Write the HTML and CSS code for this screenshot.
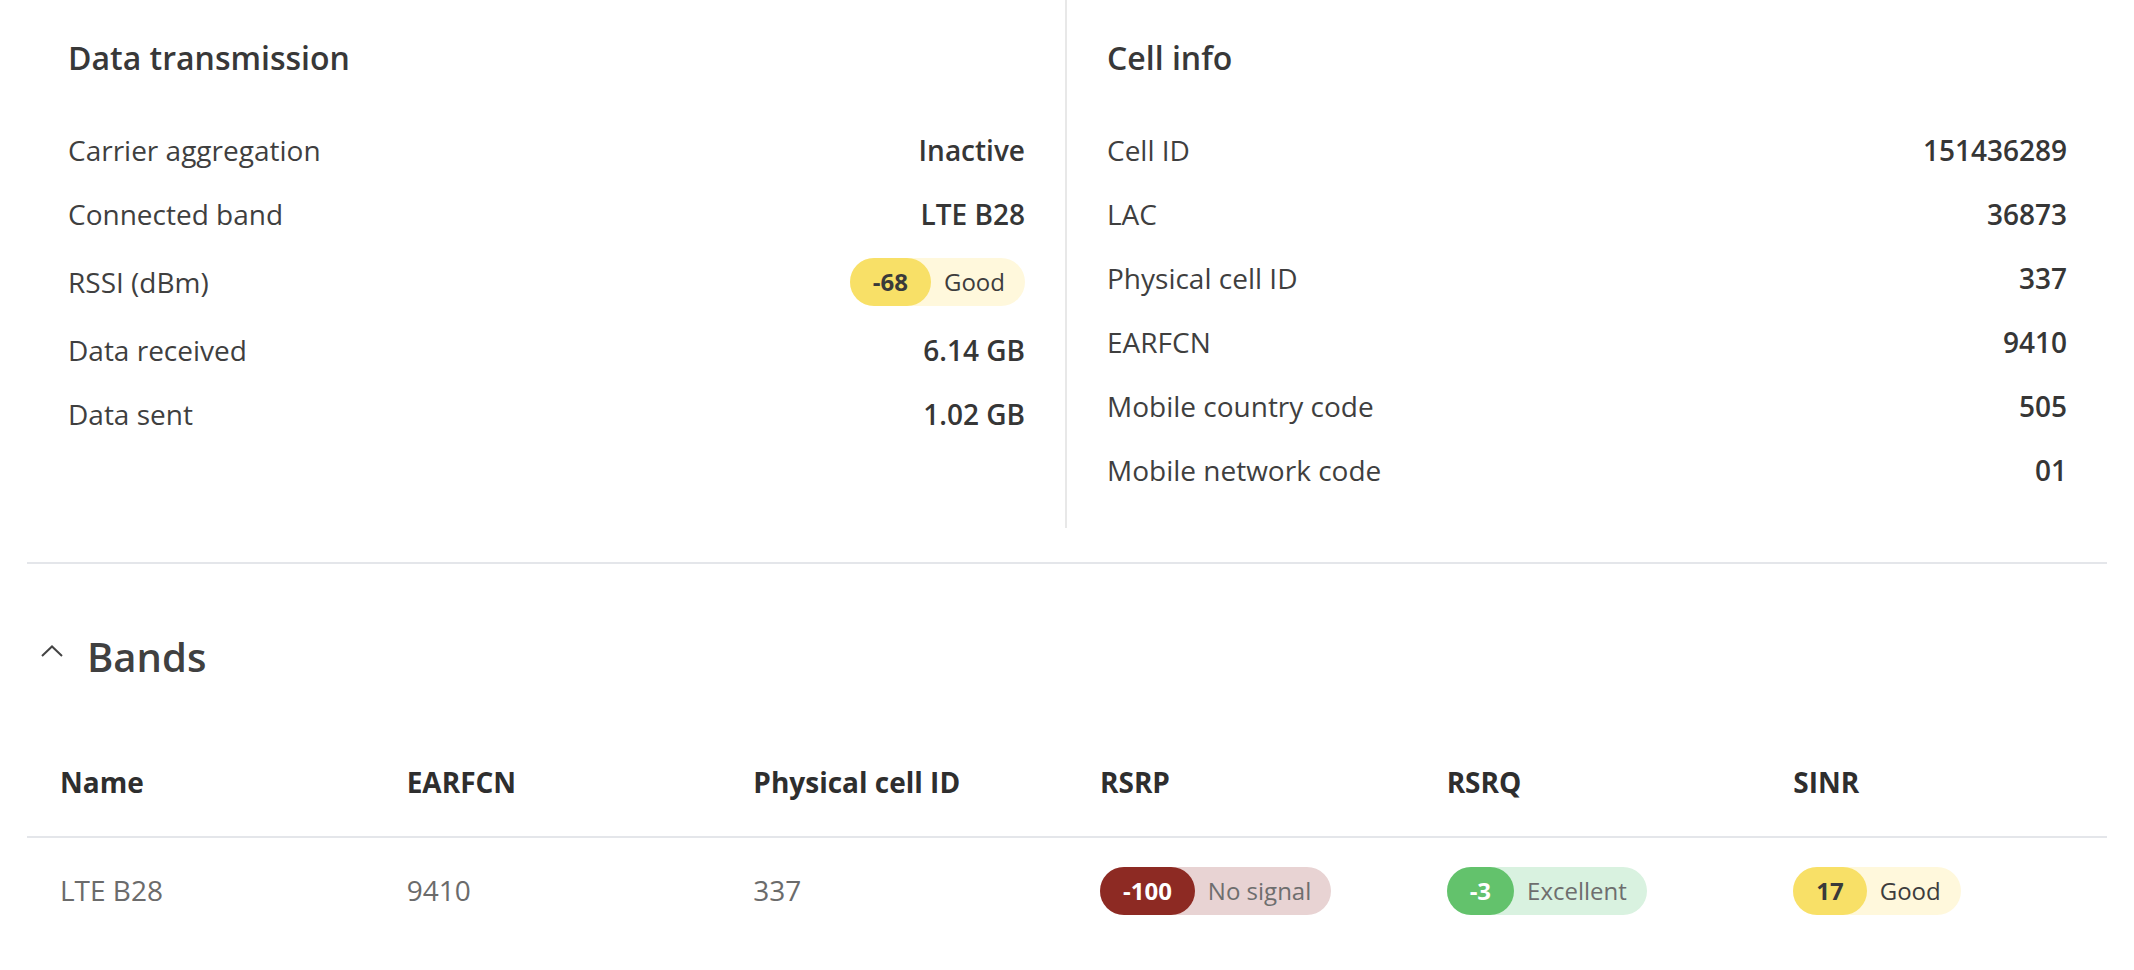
FILE: index.html
```html
<!DOCTYPE html>
<html lang="en">
<head>
<meta charset="utf-8">
<title>Mobile status</title>
<link rel="stylesheet" href="styles.css">
</head>
<body>
<div class="page">
  <section class="info">
    <div class="col col-left">
      <h2 class="col-title">Data transmission</h2>
      <div class="row"><span class="lbl">Carrier aggregation</span><span class="val">Inactive</span></div>
      <div class="row"><span class="lbl">Connected band</span><span class="val">LTE B28</span></div>
      <div class="row"><span class="lbl">RSSI (dBm)</span><span class="badge badge-yellow"><span class="badge-val">-68</span><span class="badge-lbl">Good</span></span></div>
      <div class="row"><span class="lbl">Data received</span><span class="val">6.14 GB</span></div>
      <div class="row"><span class="lbl">Data sent</span><span class="val">1.02 GB</span></div>
    </div>
    <div class="col col-right">
      <h2 class="col-title">Cell info</h2>
      <div class="row"><span class="lbl">Cell ID</span><span class="val">151436289</span></div>
      <div class="row"><span class="lbl">LAC</span><span class="val">36873</span></div>
      <div class="row"><span class="lbl">Physical cell ID</span><span class="val">337</span></div>
      <div class="row"><span class="lbl">EARFCN</span><span class="val">9410</span></div>
      <div class="row"><span class="lbl">Mobile country code</span><span class="val">505</span></div>
      <div class="row"><span class="lbl">Mobile network code</span><span class="val">01</span></div>
    </div>
  </section>

  <section class="bands">
    <div class="bands-head">
      <svg class="chev" width="22" height="12" viewBox="0 0 22 12"><polyline points="1,11 11,1.5 21,11" fill="none" stroke="#444" stroke-width="2"/></svg>
      <h2 class="bands-title">Bands</h2>
    </div>
    <table class="tbl">
      <thead>
        <tr><th>Name</th><th>EARFCN</th><th>Physical cell ID</th><th>RSRP</th><th>RSRQ</th><th>SINR</th></tr>
      </thead>
      <tbody>
        <tr>
          <td>LTE B28</td>
          <td>9410</td>
          <td>337</td>
          <td><span class="badge badge-red"><span class="badge-val">-100</span><span class="badge-lbl">No signal</span></span></td>
          <td><span class="badge badge-green"><span class="badge-val">-3</span><span class="badge-lbl">Excellent</span></span></td>
          <td><span class="badge badge-yellow"><span class="badge-val">17</span><span class="badge-lbl">Good</span></span></td>
        </tr>
      </tbody>
    </table>
  </section>
</div>
</body>
</html>
```

FILE: styles.css
```css
* { box-sizing: border-box; }
html, body { margin: 0; padding: 0; background: #ffffff; }
body {
  font-family: "Open Sans", "Noto Sans", sans-serif;
  color: #3d3d3d;
  width: 2134px;
}
.page { padding: 0 27px; }

.info {
  display: grid;
  grid-template-columns: 1040px 1040px;
  padding-bottom: 34px;
  border-bottom: 2px solid #e4e6ea;
}
.col { padding: 36px 40px 26px 41px; }
.col-left { border-right: 2px solid #e8e8e8; }
.col-right { padding-left: 40px; padding-right: 40px; }
.col-title {
  margin: 0 0 38px 0;
  font-size: 32px;
  line-height: 44px;
  font-weight: 600;
  color: #383838;
}
.row {
  display: flex;
  justify-content: space-between;
  align-items: center;
  padding: 12px 0;
  min-height: 64px;
  font-size: 28px;
  line-height: 40px;
}
.lbl { color: #3f3f3f; }
.val { font-weight: 600; color: #363636; }

.badge {
  display: inline-flex;
  align-items: center;
  height: 48px;
  border-radius: 24px;
  font-size: 24px;
  line-height: 48px;
  white-space: nowrap;
}
.badge-val {
  padding: 0 23px;
  height: 48px;
  border-radius: 24px;
  font-weight: 700;
}
.badge-lbl { padding: 0 20px 0 13px; }
.badge-yellow { background: #fff8dc; }
.badge-yellow .badge-val { background: #f8e067; color: #3a3a3a; }
.badge-yellow .badge-lbl { color: #3d3d3d; }
.badge-red { background: #e8d3d3; }
.badge-red .badge-val { background: #8d2a23; color: #ffffff; }
.badge-red .badge-lbl { color: #6e6e6e; }
.badge-green { background: #d9f2e0; }
.badge-green .badge-val { background: #63c26c; color: #ffffff; }
.badge-green .badge-lbl { color: #6e6e6e; }

.bands-head {
  display: flex;
  align-items: center;
  gap: 24px;
  margin-top: 66px;
  padding-left: 14px;
}
.chev { display: block; margin-top: -12px; }
.bands-title {
  margin: 0;
  font-size: 40px;
  line-height: 54px;
  font-weight: 600;
  color: #404040;
}

.tbl {
  width: 2080px;
  table-layout: fixed;
  border-collapse: collapse;
  margin-top: 58px;
}
.tbl th {
  text-align: left;
  font-size: 28px;
  line-height: 40px;
  font-weight: 700;
  color: #2e2e2e;
  padding: 20px 34px 34px 33px;
  border-bottom: 2px solid #e4e6ea;
}
.tbl td {
  font-size: 28px;
  line-height: 48px;
  color: #6b6b6b;
  padding: 27px 34px 29px 33px;
  vertical-align: middle;
}
```
